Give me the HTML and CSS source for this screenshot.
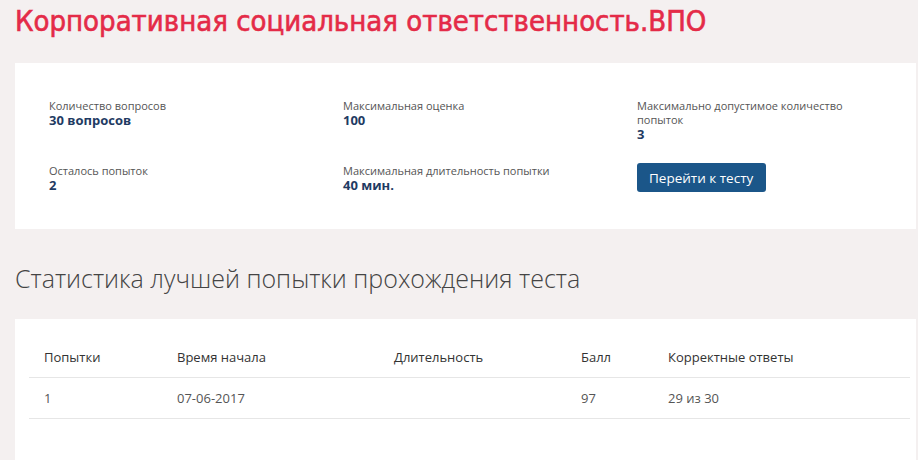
FILE: index.html
```html
<!DOCTYPE html>
<html lang="ru">
<head>
  <meta charset="UTF-8">
  <meta name="viewport" content="width=device-width, initial-scale=1.0">
  <title>Корпоративная социальная ответственность.ВПО</title>
  <link rel="stylesheet" href="styles.css">
</head>
<body>
  <h1 class="page-title">Корпоративная социальная ответственность.ВПО</h1>

  <div class="card info-card">
    <div class="info-grid">
      <div class="info-item">
        <div class="info-label">Количество вопросов</div>
        <div class="info-value">30 вопросов</div>
      </div>
      <div class="info-item">
        <div class="info-label">Максимальная оценка</div>
        <div class="info-value">100</div>
      </div>
      <div class="info-item">
        <div class="info-label">Максимально допустимое количество попыток</div>
        <div class="info-value">3</div>
      </div>
      <div class="info-item">
        <div class="info-label">Осталось попыток</div>
        <div class="info-value">2</div>
      </div>
      <div class="info-item">
        <div class="info-label">Максимальная длительность попытки</div>
        <div class="info-value">40 мин.</div>
      </div>
      <div class="info-item">
        <button type="button" class="button">Перейти к тесту</button>
      </div>
    </div>
  </div>

  <h2 class="section-title">Статистика лучшей попытки прохождения теста</h2>

  <div class="card stats-card">
    <table class="stats-table">
      <thead>
        <tr>
          <th class="col-try">Попытки</th>
          <th class="col-start">Время начала</th>
          <th class="col-length">Длительность</th>
          <th class="col-score">Балл</th>
          <th>Корректные ответы</th>
        </tr>
      </thead>
      <tbody>
        <tr>
          <td>1</td>
          <td>07-06-2017</td>
          <td></td>
          <td>97</td>
          <td>29 из 30</td>
        </tr>
      </tbody>
    </table>
  </div>
</body>
</html>
```

FILE: styles.css
```css
body {
  margin: 0;
  background-color: #f4f0f0;
  font-family: "Open Sans", Arial, sans-serif;
  height: 460px;
  overflow: hidden;
}
.page-title {
  margin: 0;
  padding: 2px 0 0 15px;
  font-family: "DejaVu Sans Condensed", "DejaVu Sans", sans-serif;
  font-stretch: condensed;
  font-weight: 400;
  font-size: 29px;
  line-height: 38px;
  color: #e42b48;
  -webkit-text-stroke: 0.6px #e42b48;
}
.card {
  background-color: #fff;
  margin: 0 2px 0 15px;
}
.info-card {
  margin-top: 23px;
  padding: 36px 0 37px 34px;
}
.info-grid {
  display: grid;
  grid-template-columns: repeat(3, 230px);
  column-gap: 64px;
  row-gap: 23px;
  align-items: start;
}
.info-label {
  font-size: 11px;
  line-height: 14px;
  color: #555;
}
.info-value {
  font-size: 13px;
  font-weight: 700;
  line-height: 14px;
  color: #1f3b63;
}
.button {
  display: inline-block;
  background-color: #1b5689;
  color: #fff;
  font-family: "Open Sans", Arial, sans-serif;
  font-size: 13.5px;
  padding: 0 13px 0 12px;
  height: 29px;
  border: none;
  border-radius: 3px;
  margin-top: -1px;
  cursor: pointer;
}
.section-title {
  margin: 0;
  padding: 34px 0 0 15px;
  height: 56px;
  font-weight: 300;
  font-size: 25px;
  line-height: 30px;
  color: #444;
}
.stats-card {
  padding: 18px 6px 0 14px;
  height: 200px;
}
.stats-table {
  width: 100%;
  border-collapse: collapse;
  font-size: 13px;
}
.stats-table th,
.stats-table td {
  text-align: left;
  padding: 12px 15px 11px;
  line-height: 17px;
  border-bottom: 1px solid #e6e6e6;
}
.stats-table th {
  font-weight: 500;
  color: #333;
}
.stats-table td {
  color: #555;
}
.col-try { width: 103px; }
.col-start { width: 187px; }
.col-length { width: 157px; }
.col-score { width: 57px; }
```
